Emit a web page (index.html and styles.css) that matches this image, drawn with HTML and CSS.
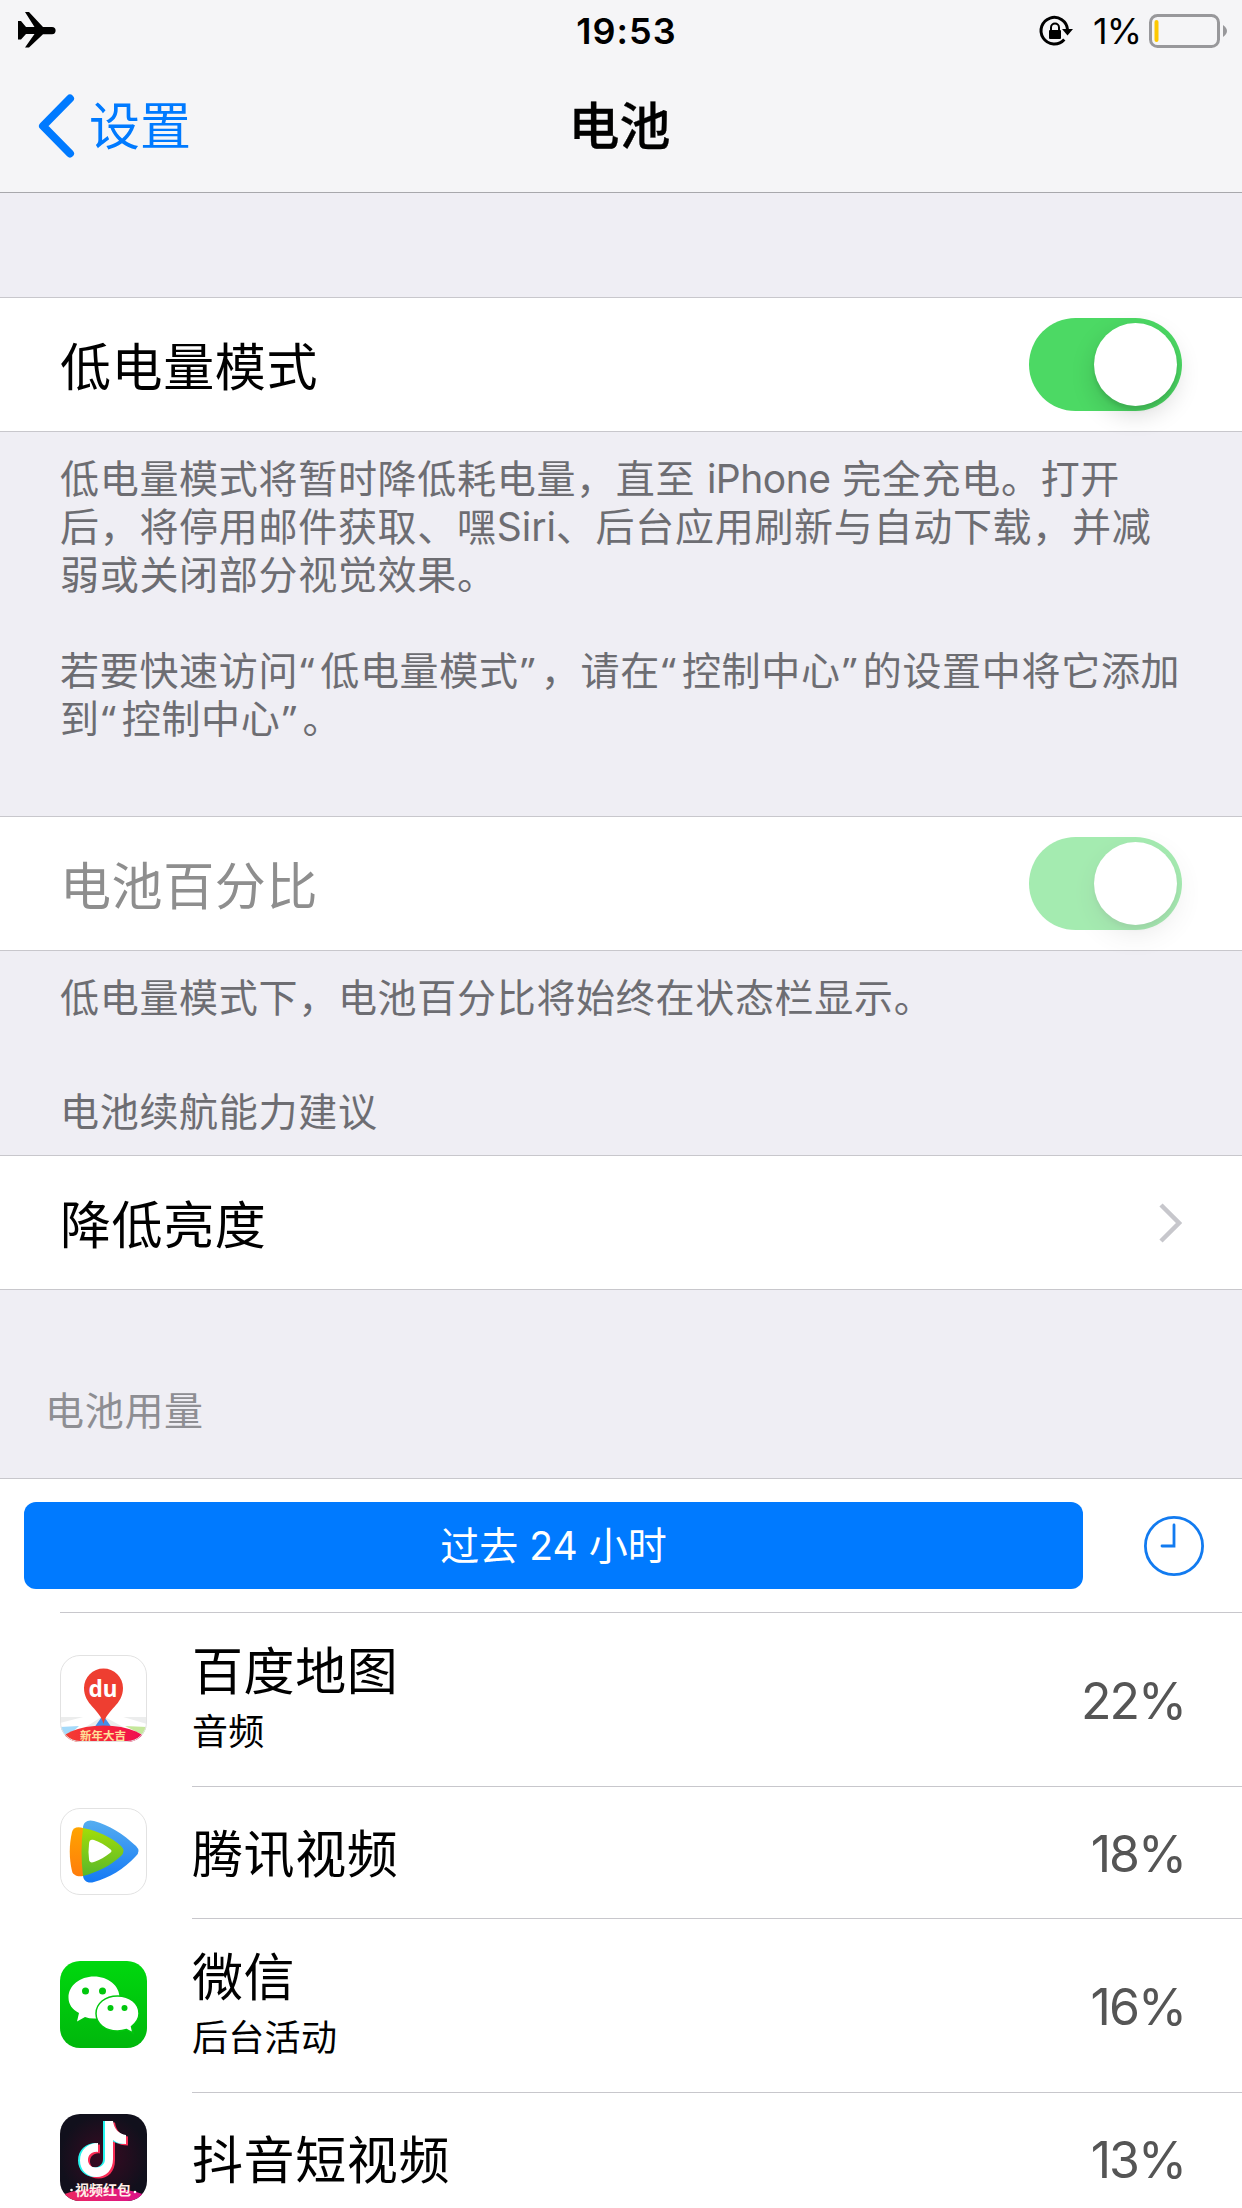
FILE: index.html
```html
<!DOCTYPE html>
<html lang="zh-CN">
<head>
<meta charset="utf-8">
<title>电池</title>
<link rel="stylesheet" href="styles.css">
</head>
<body>
<header class="top">
  <div class="status">
    <svg class="plane" width="38" height="36" viewBox="0 0 38 36"><path d="M0 9h3l5 6h8.500L7 0h4l14 15h9a3.300 3.300 0 0 1 0 7.200h-9L11 35.500H7L16.500 22H8l-5 5.500H0z"/></svg>
    <span class="time">19:53</span>
    <div class="indicators">
      <svg width="36" height="36" viewBox="0 0 36 36"><path d="M27.300 26.500A13.300 13.300 0 1 1 30.600 17" fill="none" stroke="#000" stroke-width="3"/><path d="M25 16h11l-5.500 6.500z"/><rect x="12" y="17" width="12" height="9" rx="1"/><path d="M14 18v-3.500a4 4 0 0 1 8 0V18" fill="none" stroke="#000" stroke-width="2"/></svg>
      <span class="level">1%</span>
      <svg width="79" height="34" viewBox="0 0 79 34"><rect x="1.500" y="1.500" width="68" height="31" rx="7" fill="none" stroke="#98989b" stroke-width="3"/><rect x="5.500" y="6" width="4" height="22" rx="2" fill="#fdc800"/><path d="M74 11q8 6 0 12z" fill="#98989b"/></svg>
    </div>
  </div>
  <nav class="nav">
    <a class="back"><svg width="38" height="66" viewBox="0 0 38 66"><path d="M33 5.500L6 33l27 27.500" fill="none" stroke="#007aff" stroke-width="8" stroke-linecap="round" stroke-linejoin="round"/></svg><span>设置</span></a>
    <h1>电池</h1>
  </nav>
</header>
<main>
  <section class="group first">
    <div class="row"><span>低电量模式</span><i class="toggle"></i></div>
  </section>
  <p class="note">低电量模式将暂时降低耗电量，直至 <span class="latin">iPhone</span> 完全充电。打开<br>后，将停用邮件获取、嘿<span class="latin siri">Siri</span>、后台应用刷新与自动下载，并减<br>弱或关闭部分视觉效果。<br><br>若要快速访问<span class="quote">“</span>低电量模式<span class="quote">”</span>，请在<span class="quote">“</span>控制中心<span class="quote">”</span>的设置中将它添加<br>到<span class="quote">“</span>控制中心<span class="quote">”</span>。</p>
  <section class="group second">
    <div class="row off"><span>电池百分比</span><i class="toggle"></i></div>
  </section>
  <p class="note">低电量模式下，电池百分比将始终在状态栏显示。</p>
  <h2 class="heading">电池续航能力建议</h2>
  <section class="group third">
    <div class="row"><span>降低亮度</span><svg width="24" height="42" viewBox="0 0 24 42"><path d="M3 3l18 18L3 39" fill="none" stroke="#c7c7cc" stroke-width="4.500"/></svg></div>
  </section>
  <h2 class="heading usage-heading">电池用量</h2>
  <section class="usage">
    <div class="range">
      <button class="period">过去 24 小时</button>
      <svg width="60" height="60" viewBox="0 0 60 60"><g fill="none" stroke="#127bf0" stroke-width="2.800" stroke-linecap="round"><circle cx="30" cy="30" r="28.600"/><path d="M30 9v21H18"/></g></svg>
    </div>
    <ul class="apps">
      <li class="app tall">
        <svg class="icon" viewBox="0 0 87 87">
          <defs>
            <clipPath id="tile"><rect width="87" height="87" rx="20"/></clipPath>
            <linearGradient id="festive"><stop offset="0" stop-color="#f4432f"/><stop offset=".6" stop-color="#f51e3d"/><stop offset="1" stop-color="#ed0758"/></linearGradient>
          </defs>
          <g clip-path="url(#tile)">
            <rect width="87" height="87" fill="#fff"/>
            <path d="M0 62h87v10H0z" fill="#eceded"/>
            <path d="M0 68l27-7H43L5 85H0z" fill="#fff"/><path d="M43 61h17l27 8v16z" fill="#fff"/>
            <path d="M0 72l19-1L7 82H0z" fill="#a4dafa"/><path d="M65 71l22 1v10z" fill="#c5e79b"/>
            <path d="M43 60l9 13H34z" fill="#448ee8"/>
            <ellipse cx="43.500" cy="91" rx="46" ry="20.500" fill="url(#festive)"/>
            <path d="M43.500 69C40 54 24 50 24 33a19.500 19.500 0 0 1 39 0c0 17-16 21-19.500 36z" fill="#ee3e31"/>
            <text x="43" y="41.500" class="du">du</text><text x="43" y="84.500" class="banner">新年大吉</text>
          </g>
          <rect x=".5" y=".5" width="86" height="86" rx="19.500" class="edge"/>
        </svg>
        <div class="label"><b>百度地图</b><small>音频</small></div><span class="share">22%</span>
      </li>
      <li class="app">
        <svg class="icon" viewBox="0 0 87 87">
          <defs>
            <linearGradient id="blue" x2="0" y2="1"><stop stop-color="#55adf0"/><stop offset="1" stop-color="#1479f5"/></linearGradient>
            <linearGradient id="green" x2="0" y2="1"><stop stop-color="#a3dd08"/><stop offset="1" stop-color="#58b82a"/></linearGradient>
            <linearGradient id="orange" x2="0" y2="1"><stop stop-color="#ffa400"/><stop offset="1" stop-color="#ff7d0b"/></linearGradient>
          </defs>
          <rect x=".5" y=".5" width="86" height="86" rx="19.500" fill="#fff" stroke="#e2e2e2"/>
          <path d="M23 20c0-6 5-9 11-7 15 4 29 13 42 25q5 5 0 10C64 61 49 70 34 74c-6 2-11-1-11-7-2-14-2-32 0-47z" fill="url(#blue)"/>
          <path d="M12 24c1-4 5-6 11-4v48c-6 1-10-1-11-5-3-13-3-26 0-39z" fill="url(#orange)"/>
          <path d="M23 20c15 3 28 9 38 18q5 5 0 10C50 58 38 64 23 68c-2-16-2-32 0-48z" fill="url(#green)"/>
          <path d="M29 36c0-4 2-5 5-4 6 2 11 5 16 9q3 2 0 4c-5 4-10 7-16 9-3 1-5 0-5-3q-1-7 0-15z" fill="#fff"/>
        </svg>
        <div class="label"><b>腾讯视频</b></div><span class="share">18%</span>
      </li>
      <li class="app tall">
        <svg class="icon" viewBox="0 0 87 87">
          <defs><linearGradient id="wechat" x2="0" y2="1"><stop stop-color="#00d80e"/><stop offset="1" stop-color="#00b70c"/></linearGradient></defs>
          <rect width="87" height="87" rx="20" fill="url(#wechat)"/>
          <path d="M34 15.500c14 0 25.500 9 25.500 21S48 57.500 34 57.500q-5 0-9-1.500l-8 4.500 2-8.500C12 48.500 8.500 43 8.500 36.500c0-12 11.500-21 25.500-21z" fill="#fff"/>
          <path d="M57.500 35C70 35 79 42.500 79 52.500c0 5.500-3 9.500-7.500 13l1.500 6.500-6.500-3.500c-3 1-6 1.500-9 1.500C45 70 36 62.500 36 52.500S45 35 57.500 35z" fill="#fff" stroke="#00c70d" stroke-width="1.500"/>
          <g fill="#00c70d"><circle cx="25.500" cy="30" r="3.500"/><circle cx="42.500" cy="30" r="3.500"/><circle cx="50.500" cy="47" r="3"/><circle cx="64.500" cy="47" r="3"/></g>
        </svg>
        <div class="label"><b>微信</b><small>后台活动</small></div><span class="share">16%</span>
      </li>
      <li class="app">
        <svg class="icon" viewBox="0 0 87 87">
          <defs>
            <radialGradient id="night"><stop stop-color="#3a0a22"/><stop offset="1" stop-color="#11101c"/></radialGradient>
            <linearGradient id="glow"><stop stop-color="#f02b56"/><stop offset="1" stop-color="#d80f93"/></linearGradient>
            <path id="note" d="M45 7h8c1 8 6 13 13 14v9c-5 0-9-1-13-4v19c0 11-7 18-16.500 18S20 56 20 46.500C20 36 28 29 38 29v9c-6-1-10 3-10 8 0 4 3 7.500 8 7.500s9-3 9-8.500z"/>
          </defs>
          <g clip-path="url(#tile)">
            <rect width="87" height="87" fill="url(#night)"/>
            <ellipse cx="43.500" cy="97" rx="58" ry="23" fill="url(#glow)"/>
            <use href="#note" x="2" y="1.500" fill="#f92c55"/><use href="#note" x="-2" fill="#25f4ee"/><use href="#note" fill="#fff"/>
            <text x="43" y="81" class="packet">视频红包</text>
            <circle cx="11.500" cy="76" r="1.300" fill="#fff"/><circle cx="75" cy="78" r="1.300" fill="#fff"/>
          </g>
        </svg>
        <div class="label"><b>抖音短视频</b></div><span class="share">13%</span>
      </li>
    </ul>
  </section>
</main>
</body>
</html>
```
FILE: styles.css
```css
* { box-sizing: border-box; }
body {
  margin: 0;
  height: 2208px;
  overflow: hidden;
  background: #efeef4;
  color: #000;
  font-family: Inter, "Noto Sans CJK SC", sans-serif;
  font-size: 51px;
}
h1, h2, p, ul { margin: 0; padding: 0; font-weight: 400; }
svg { display: block; flex: none; }

.top { height: 193px; background: #f5f5f7; border-bottom: 1px solid #a8a8ac; }
.status {
  display: grid;
  grid-template-columns: 1fr auto 1fr;
  align-items: center;
  height: 60px;
  padding: 0 14px 0 18px;
  font-size: 36px;
  line-height: 60px;
}
.time { padding: 1px 0 0 7px; font-weight: 600; letter-spacing: 1px; }
.plane { margin-top: -1px; }
.indicators { display: flex; justify-content: flex-end; align-items: center; }
.level { margin: 1px 8px 0 20px; letter-spacing: -1px; }
.nav {
  display: grid;
  grid-template-columns: 1fr auto 1fr;
  align-items: center;
  height: 132px;
  padding: 0 40px 0 37px;
}
.back { display: flex; align-items: center; gap: 14px; color: #007aff; }
.back span, h1 { padding-top: 2px; line-height: 130px; }
h1 { font-size: 51px; font-weight: 500; -webkit-text-stroke: .3px #000; }

.group { background: #fff; border: solid #c8c7cc; border-width: 1px 0; }
.first { margin-top: 104px; }
.row {
  display: flex;
  align-items: center;
  justify-content: space-between;
  height: 133px;
  padding: 0 60px;
  line-height: 60px;
  letter-spacing: .6px;
}
.row span { padding-top: 6px; }
.off span { color: #8e8e8e; }
.toggle {
  display: flex;
  justify-content: flex-end;
  width: 153px;
  height: 93px;
  padding: 5px;
  border-radius: 47px;
  background: #4cd964;
}
.toggle::after {
  content: "";
  width: 83px;
  height: 83px;
  border-radius: 50%;
  background: #fff;
  box-shadow: 0 9px 24px rgba(0, 0, 0, .15), 0 4px 4px rgba(0, 0, 0, .1);
}
.off .toggle { opacity: .5; }

.note, .heading {
  padding: 0 0 0 60px;
  color: #6d6d72;
  font-size: 39px;
  line-height: 48px;
  letter-spacing: .7px;
  white-space: nowrap;
}
.note { padding-top: 23px; }
.latin { letter-spacing: -.5px; }
.siri { letter-spacing: 0; }
.quote { margin-left: 2px; font-family: "Noto Sans", sans-serif; line-height: 1; letter-spacing: 6px; }
.second { margin-top: 73px; }
.heading { margin-top: 66px; }
.third { margin-top: 19px; }
.usage-heading { margin-top: 97px; padding-left: 45px; color: #8e8e93; }

.usage { margin-top: 43px; border-top: 1px solid #c8c7cc; background: #fff; }
.range {
  display: flex;
  align-items: center;
  justify-content: space-between;
  height: 133px;
  padding: 0 38px 0 24px;
}
.period {
  width: 1059px;
  height: 87px;
  padding: 0;
  border: 0;
  border-radius: 12px;
  background: #007aff;
  color: #fff;
  font: 400 39px/87px Inter, "Noto Sans CJK SC", sans-serif;
}
.apps { list-style: none; }
.app { display: flex; align-items: center; height: 132px; padding-left: 60px; position: relative; }
.app.tall { height: 174px; }
.app::before {
  content: "";
  position: absolute;
  top: 0;
  left: 192px;
  right: 0;
  height: 1px;
  background: #c8c7cc;
}
.app:first-child::before { left: 60px; }
.icon { width: 87px; height: 87px; margin-top: -1px; }
.edge { fill: none; stroke: #e2e2e2; }
.label { flex: 1; display: flex; flex-direction: column; margin-left: 45px; padding-top: 5px; letter-spacing: .6px; }
.tall .label { padding-top: 1px; }
.label b { font-weight: 400; line-height: 64px; }
.label small { font-size: 36px; line-height: 56px; letter-spacing: .3px; }
.share { padding: 3px 57px 0 0; color: #555; font-size: 50px; letter-spacing: -2px; }
.du { fill: #fff; font: 700 22.500px "Noto Sans", sans-serif; text-anchor: middle; }
.banner { fill: #ffe09a; font: 700 11.500px "Noto Sans CJK SC", sans-serif; text-anchor: middle; }
.packet { fill: #fff0e8; font: 700 14px "Noto Sans CJK SC", sans-serif; text-anchor: middle; }
```
